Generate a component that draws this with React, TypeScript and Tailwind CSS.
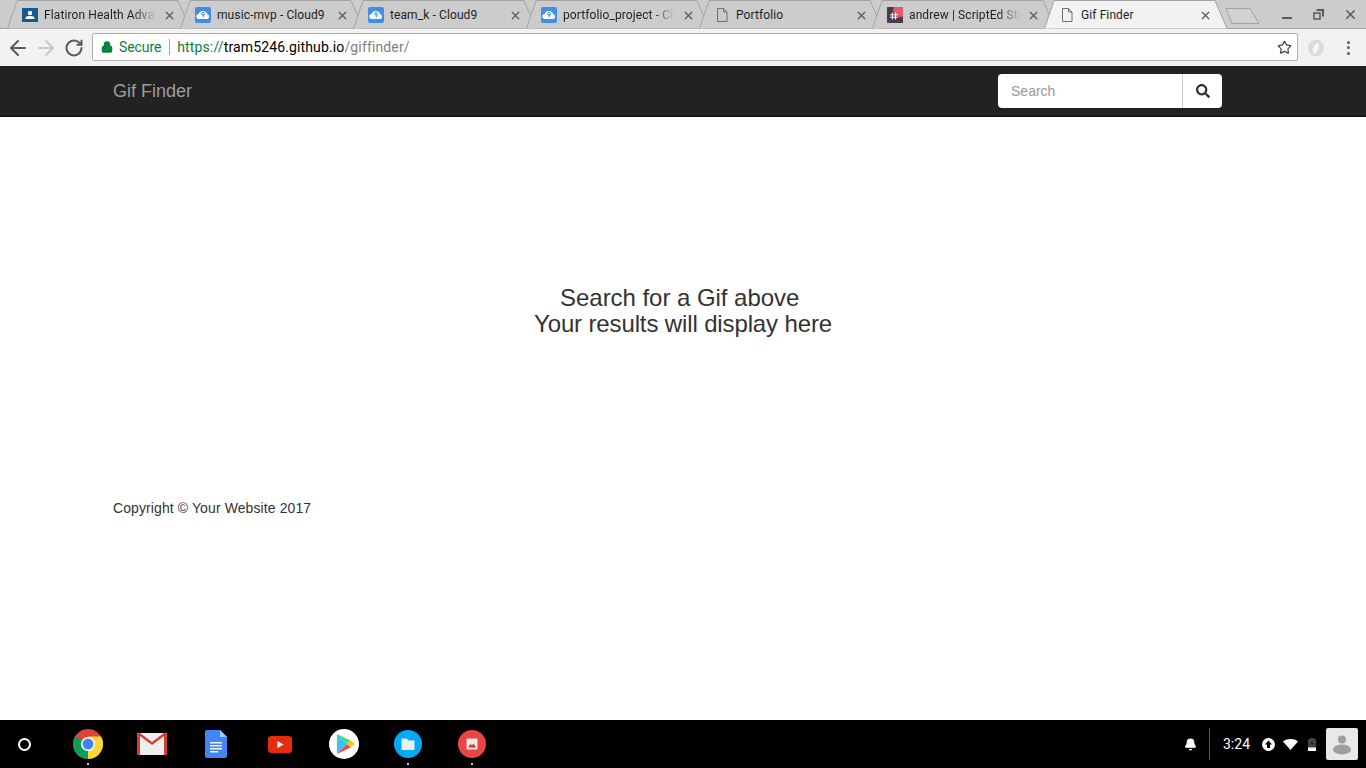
import { ArrowLeft, ArrowRight, RotateCw, Star, X, Lock, Bell } from "lucide-react";
import { FaSearch } from "react-icons/fa";

type TabInfo = { title: string; icon: "flatiron" | "cloud9" | "page" | "scripted"; fade?: boolean };

const tabs: TabInfo[] = [
  { title: "Flatiron Health Advanced", icon: "flatiron", fade: true },
  { title: "music-mvp - Cloud9", icon: "cloud9" },
  { title: "team_k - Cloud9", icon: "cloud9" },
  { title: "portfolio_project - Cloud9", icon: "cloud9", fade: true },
  { title: "Portfolio", icon: "page" },
  { title: "andrew | ScriptEd Studio", icon: "scripted", fade: true },
  { title: "Gif Finder", icon: "page" },
];

const Favicon = ({ icon }: { icon: TabInfo["icon"] }) => {
  if (icon === "flatiron") {
    return (
      <svg width="16" height="16" viewBox="0 0 16 16">
        <rect y="1" width="16" height="14" fill="#145a8f" />
        <circle cx="8" cy="6" r="2.200" fill="#fff" />
        <path d="M3.500 12v-1c0-1.500 2-2 4.500-2s4.500.5 4.500 2v1z" fill="#fff" />
      </svg>
    );
  }
  if (icon === "cloud9") {
    return (
      <svg width="16" height="16" viewBox="0 0 16 16">
        <rect width="16" height="16" rx="2" fill="#3f8fe6" />
        <path d="M4 12a2.500 2.500 0 0 1-.4-5 4.500 4.500 0 0 1 8.600.3 2.400 2.400 0 0 1 0 4.700z" fill="#fff" />
        <circle cx="8" cy="6.800" r="1.400" fill="none" stroke="#3f8fe6" strokeWidth="1" />
        <path d="M9.300 7.200 8.200 10" stroke="#3f8fe6" strokeWidth="1" fill="none" />
      </svg>
    );
  }
  if (icon === "scripted") {
    return (
      <svg width="16" height="16" viewBox="0 0 16 16">
        <rect width="16" height="16" fill="#4d3a52" />
        <path d="M7 0h9v9.500A7 7 0 0 1 7 0z" fill="#e8566a" />
        <path d="M5.500 5.500v7M8.500 5.500v7M3 7.800h8M3 10.200h8" stroke="#fff" strokeWidth="1.100" fill="none" />
      </svg>
    );
  }
  return (
    <svg width="16" height="16" viewBox="0 0 16 16" fill="none">
      <path d="M3.500 1.500h6l3.500 3.500v9.500h-9.500z M9.500 1.500v3.500h3.500" stroke="#6e6e6e" strokeWidth="1" />
    </svg>
  );
};

const Tab = ({ tab, index }: { tab: TabInfo; index: number }) => {
  const active = index === tabs.length - 1;
  return (
    <div className={`relative h-[28px] shrink-0 ${active ? "z-10 w-[173px]" : index === 5 ? "w-[172px]" : "w-[173px]"}`}>
      <svg className="absolute left-0 top-0" width="184" height="29" viewBox="0 0 184 29">
        <path
          d="M0.500 28.500 L10 0.500 H171 L183 28.500"
          fill={active ? "#f2f2f2" : "#cccccc"}
          stroke="#a3a3a3"
          strokeWidth="1"
        />
      </svg>
      <div className="absolute inset-0 flex items-center pl-[15px] pt-[2px]">
        <Favicon icon={tab.icon} />
        <span
          className={`ml-[6px] w-[112px] overflow-hidden whitespace-nowrap text-[12px] tracking-[0.1px] text-[#1f1f1f] ${
            tab.fade ? "[mask-image:linear-gradient(to_right,black_80%,transparent)]" : ""
          }`}
        >
          {tab.title}
        </span>
        <X size={13} strokeWidth={2.4} className={`text-[#5a5a5a] ${active ? "ml-[6px]" : index === 5 ? "ml-[6px]" : "ml-[7px]"}`} />
      </div>
    </div>
  );
};

const TabStrip = () => (
  <div className="relative flex h-[29px] items-start overflow-hidden bg-[#cccccc] pl-[7px]">
    <div className="absolute bottom-0 left-0 right-0 h-px bg-[#a3a3a3]" />
    {tabs.map((tab, i) => (
      <Tab key={tab.title} tab={tab} index={i} />
    ))}
    {/* new tab button */}
    <svg className="ml-[8px] mt-[7px] shrink-0" width="36" height="18" viewBox="0 0 36 18">
      <path d="M1 1.500 H25 L34 16.500 H7 Z" fill="#d2d2d2" stroke="#a3a3a3" strokeWidth="1" />
    </svg>
    <div className="ml-auto flex h-[28px] items-center">
      <div className="mr-[21px] mt-[8px] h-[2px] w-[10px] bg-[#5a5a5a]" />
      <svg className="mr-[19px]" width="11" height="11" viewBox="0 0 11 11" fill="none" stroke="#5a5a5a">
        <path d="M3.500 1h6.500v6.500" strokeWidth="2" />
        <path d="M1 4h6v6H1z" strokeWidth="1.500" />
      </svg>
      <X size={15} strokeWidth={2.4} className="mr-[8px] text-[#5a5a5a]" />
    </div>
  </div>
);

const Toolbar = () => (
  <div className="flex h-[37px] items-center bg-[#f2f2f2]">
    <ArrowLeft size={24} strokeWidth={2} className="ml-[6px] text-[#5a5a5a]" />
    <ArrowRight size={24} strokeWidth={2} className="ml-[4px] text-[#c9c9c9]" />
    <RotateCw size={20} strokeWidth={2.4} className="ml-[6px] text-[#5a5a5a]" />
    <div className="mb-[1px] ml-[8px] flex h-[28px] w-[1206px] items-center rounded-[2px] border border-[#b0b0b0] bg-white text-[14px]">
      <Lock size={12} strokeWidth={3} fill="#0b8043" className="ml-[8px] text-[#0b8043]" />
      <span className="ml-[6px] tracking-[-0.1px] text-[#0b8043]">Secure</span>
      <div className="ml-[8px] h-[16px] w-px bg-[#a8a8a8]" />
      <span className="ml-[7px] whitespace-nowrap tracking-[0.135px]">
        <span className="text-[#0b8043]">https://</span>
        <span className="text-black">tram5246.github.io</span>
        <span className="text-[#808080]">/giffinder/</span>
      </span>
      <Star size={15} strokeWidth={2} className="ml-auto mr-[5px] text-[#444444]" />
    </div>
    <svg className="ml-[10px]" width="16" height="18" viewBox="0 0 16 18">
      <ellipse cx="8" cy="9" rx="8" ry="8.500" fill="#dcdcdc" />
      <ellipse cx="8" cy="9.500" rx="2.500" ry="5.500" fill="#f7f7f7" transform="rotate(20 8 9)" />
    </svg>
    <div className="ml-[23px] flex flex-col gap-[2.500px]">
      <div className="h-[3px] w-[3px] rounded-full bg-[#5a5a5a]" />
      <div className="h-[3px] w-[3px] rounded-full bg-[#5a5a5a]" />
      <div className="h-[3px] w-[3px] rounded-full bg-[#5a5a5a]" />
    </div>
  </div>
);

const Navbar = () => (
  <div className="flex h-[51px] items-center border-b border-[#080808] bg-[#222222] pl-[113px] font-['Liberation_Sans',sans-serif]">
    <span className="text-[18px] text-[#9d9d9d]">Gif Finder</span>
    <div className="ml-[806px] flex h-[34px] w-[224px] overflow-hidden rounded-[4px] bg-white text-[14px]">
      <input
        readOnly
        placeholder="Search"
        className="w-[184px] px-[13px] text-[#555555] outline-none placeholder:text-[#999999]"
      />
      <div className="flex flex-1 items-center justify-center border-l border-[#cccccc] text-[#333333]">
        <FaSearch size={14} />
      </div>
    </div>
  </div>
);

const Shelf = () => (
  <div className="flex h-[48px] items-center bg-black">
    <div className="ml-[18px] h-[13px] w-[13px] rounded-full border-2 border-white" />
    {/* chrome */}
    <div className="relative ml-[42px] h-[30px] w-[30px]">
      <svg width="30" height="30" viewBox="0 0 30 30">
        <circle cx="15" cy="15" r="15" fill="#db4437" />
        <path d="M15 15 2 7.500A15 15 0 0 0 15 30l7.500-13z" fill="#0f9d58" />
        <path d="M15 15 15 30A15 15 0 0 0 28 7.500H15z" fill="#fdd835" />
        <circle cx="15" cy="15" r="7" fill="#fff" />
        <circle cx="15" cy="15" r="5.500" fill="#4285f4" />
      </svg>
      <div className="absolute left-[14px] top-[34px] h-[2px] w-[2px] bg-[#cccccc]" />
    </div>
    {/* gmail */}
    <svg className="ml-[34px]" width="30" height="22" viewBox="0 0 30 22">
      <rect width="30" height="22" rx="1" fill="#eeeeee" />
      <path d="M3 22V3l12 9 12-9v19h3V1.500a1.500 1.500 0 0 0-1.500-1.500H27L15 9 3 0H1.500A1.500 1.500 0 0 0 0 1.500V22z" fill="#d23f31" />
    </svg>
    {/* docs */}
    <svg className="ml-[38px]" width="22" height="28" viewBox="0 0 22 28">
      <path d="M2 0h13l7 7v19a2 2 0 0 1-2 2H2a2 2 0 0 1-2-2V2a2 2 0 0 1 2-2z" fill="#4285f4" />
      <path d="M15 0l7 7h-7z" fill="#a1c2fa" />
      <path d="M5 12h12v1.500H5zM5 15h12v1.500H5zM5 18h12v1.500H5zM5 21h8v1.500H5z" fill="#f1f1f1" />
    </svg>
    {/* youtube */}
    <svg className="ml-[41px]" width="24" height="17" viewBox="0 0 24 17">
      <rect width="24" height="17" rx="3.500" fill="#e62b10" />
      <path d="M9.500 5v7l6-3.500z" fill="#fff" />
    </svg>
    {/* play */}
    <svg className="ml-[37px]" width="30" height="30" viewBox="0 0 30 30">
      <circle cx="15" cy="15" r="15" fill="#fff" />
      <path d="M8 5v20l10-10z" fill="#3bc4f3" />
      <path d="M8 5l10 10 3.500-3.500z" fill="#3ddc84" />
      <path d="M18 15l3.500-3.500L26 15l-4.500 3.500z" fill="#fdc704" />
      <path d="M8 25l10-10 3.500 3.500z" fill="#ee4056" />
    </svg>
    {/* files */}
    <div className="relative ml-[35px] h-[28px] w-[28px]">
      <svg width="28" height="28" viewBox="0 0 28 28">
        <circle cx="14" cy="14" r="14" fill="#03a9f4" />
        <path d="M7.500 8.500h5l2 2h6v8.500a1 1 0 0 1-1 1H8.500a1 1 0 0 1-1-1z" fill="#e8f0f4" />
      </svg>
      <div className="absolute left-[13px] top-[33px] h-[2px] w-[2px] bg-[#cccccc]" />
    </div>
    {/* gallery */}
    <div className="relative ml-[36px] h-[28px] w-[28px]">
      <svg width="28" height="28" viewBox="0 0 28 28">
        <circle cx="14" cy="14" r="14" fill="#e84545" />
        <rect x="8.500" y="8.500" width="11" height="11" rx="1" fill="#fbe9e7" />
        <path d="M10 17.500l2.500-3.500 1.500 1.500 1.500-2 2.500 4z" fill="#d32f2f" />
      </svg>
      <div className="absolute left-[13px] top-[33px] h-[2px] w-[2px] bg-[#cccccc]" />
    </div>
    {/* status tray */}
    <div className="ml-auto flex items-center">
      <Bell size={13} fill="#fff" className="text-white" />
      <div className="ml-[12px] h-[32px] w-px bg-[#555555]" />
      <span className="ml-[13px] font-['Roboto',sans-serif] text-[14px] text-white">3:24</span>
      <svg className="ml-[12px]" width="13" height="13" viewBox="0 0 13 13">
        <circle cx="6.500" cy="6.500" r="6.500" fill="#fff" />
        <path d="M6.500 2.500 10 6.500H8v3.500H5V6.500H3z" fill="#000" />
      </svg>
      {/* wifi */}
      <svg className="ml-[8px]" width="15" height="11" viewBox="0 0 15 11">
        <path d="M0 2.500C4 -.8 11 -.8 15 2.500L7.500 11z" fill="#fff" />
      </svg>
      {/* battery */}
      <svg className="ml-[10px]" width="8" height="13" viewBox="0 0 8 13">
        <rect y="1" width="8" height="12" rx="1" fill="#444444" />
        <rect x="2" width="4" height="2" fill="#444444" />
        <path d="M4.500 2 3 6h1.500L3.500 9 5.500 5H4z" fill="#111111" />
        <rect y="9.500" width="8" height="3.500" fill="#fff" />
      </svg>
      <div className="ml-[10px] mr-[8px] flex h-[32px] w-[32px] items-center justify-center rounded-[2px] bg-[#e8e8e8]">
        <svg width="24" height="24" viewBox="0 0 24 24">
          <circle cx="12" cy="7.500" r="4" fill="#9e9e9e" />
          <ellipse cx="12" cy="17.500" rx="9" ry="5" fill="#9e9e9e" />
        </svg>
      </div>
    </div>
  </div>
);

const App = () => {
  return (
    <div className="flex h-[768px] w-[1366px] flex-col overflow-hidden bg-white font-['Roboto',sans-serif]">
      <TabStrip />
      <Toolbar />
      <Navbar />
      <div className="flex-1 px-[113px] font-['Liberation_Sans',sans-serif] text-[#333333]">
        <h2 className="mt-[168px] text-center text-[24px] leading-[26.4px]">
          <span className="tracking-[-0.04px]">Search for a Gif above&nbsp;</span>
          <br />
          <span className="tracking-[-0.13px]">Your results will display here</span>
        </h2>
        <p className="mt-[160px] text-[14px] leading-[20px] tracking-[0.1px]">Copyright © Your Website 2017</p>
      </div>
      <Shelf />
    </div>
  );
};

export default App;
